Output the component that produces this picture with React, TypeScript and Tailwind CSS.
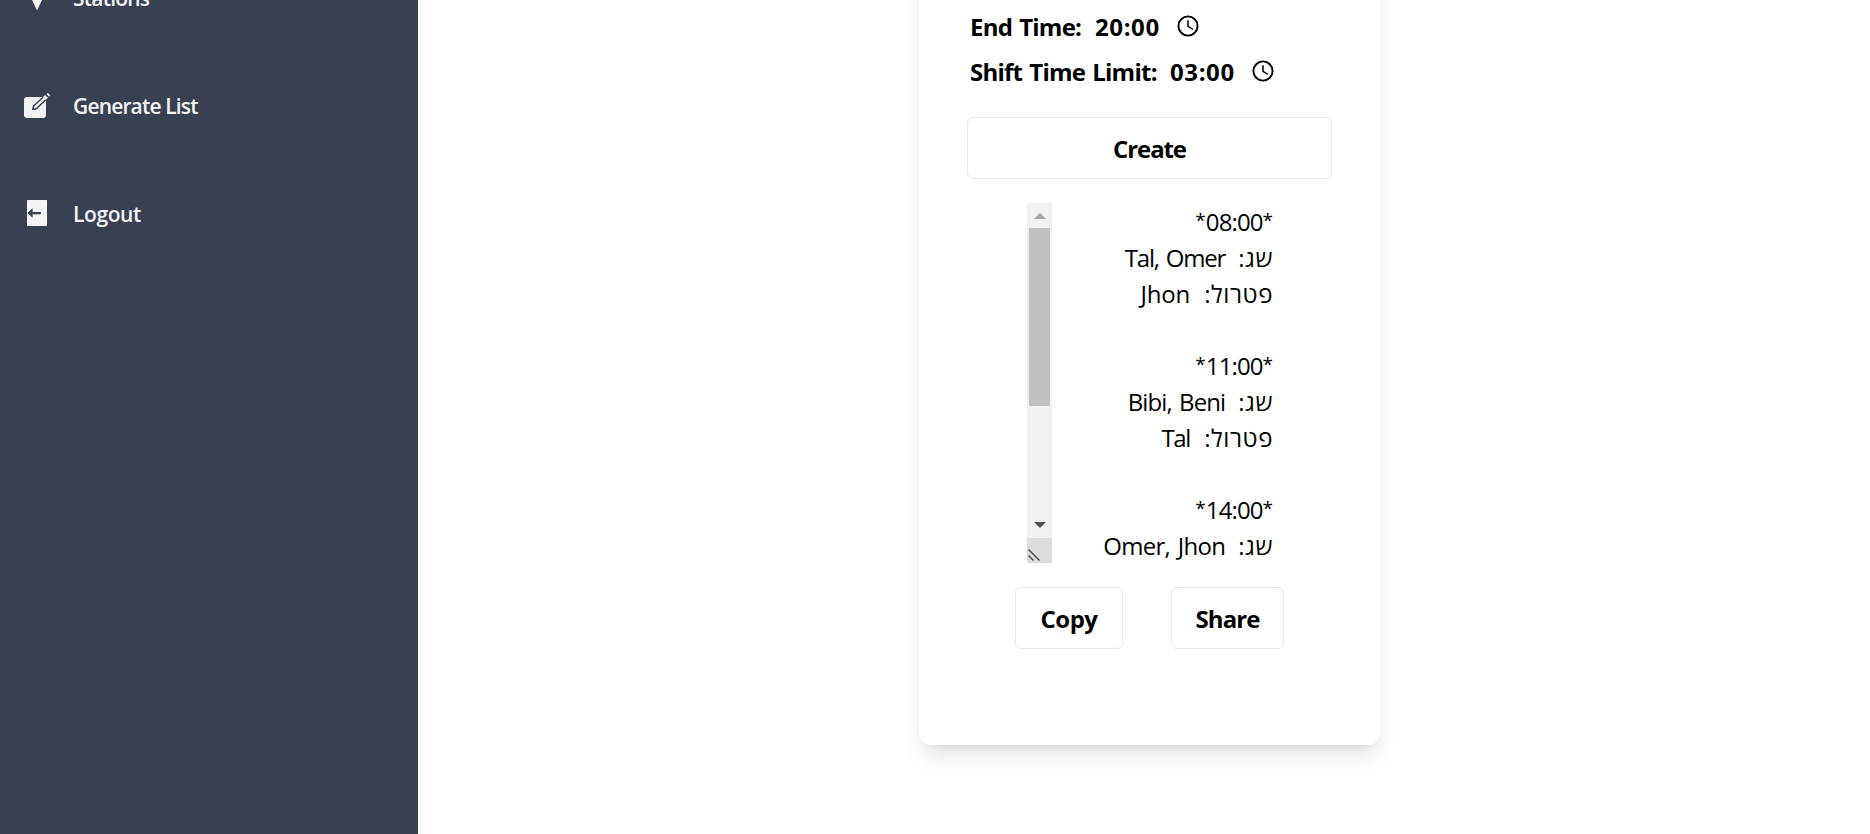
import React from "react";

function ClockIcon() {
  return (
    <svg className="h-6 w-6 shrink-0" viewBox="0 0 24 24" fill="none" stroke="#000">
      <circle cx="12" cy="12" r="9.6" strokeWidth="1.900" />
      <path d="M12 6.3v6.1l4.900 3" strokeWidth="1.500" />
    </svg>
  );
}

function StationIcon() {
  return (
    <svg className="h-[27px] w-[27px]" viewBox="0 0 27 27" fill="#f3f4f6">
      <path d="M13 0c-4.500 0-8 3.500-8 8 0 3 1.700 5.500 3 8l5 10.500 5-10.500c1.300-2.500 3-5 3-8 0-4.500-3.500-8-8-8z" />
    </svg>
  );
}

function EditIcon() {
  return (
    <svg className="h-[27px] w-[27px]" viewBox="0 0 27 27">
      <rect x="0" y="5" width="22" height="21" rx="3" fill="#f3f4f6" />
      <path d="M8 18.300l.9-4.600L21.300 2.400l3.300 3.300L12.600 17.500z" fill="#384152" />
      <path d="M9 17.300l.7-3.200L20.700 3.900l2.400 2.400L12.200 16.600z" fill="#f3f4f6" stroke="#384152" strokeWidth="1.200" />
      <path d="M18.900 5l2.200-2 2.700 2.700-2.100 2.100z" fill="#f3f4f6" />
      <path d="M22.500 2.100l1.400-1.200 2.300 2.300-1.200 1.300z" fill="#f3f4f6" />
    </svg>
  );
}

function LogoutIcon() {
  return (
    <svg className="h-[27px] w-[27px]" viewBox="0 0 27 27">
      <rect x="3" y="0" width="20" height="26" rx="0.600" fill="#f3f4f6" />
      <path d="M3.400 13l5.200-4.700v3.600h8.300v2.300H8.600v3.600z" fill="#384152" />
    </svg>
  );
}

function NavItem({ icon, label, tracking }: { icon: React.ReactNode; label: string; tracking: string }) {
  return (
    <a className="flex h-[108px] items-center gap-[22px] pl-6">
      <span className="mb-px">{icon}</span>
      <span className={`whitespace-nowrap text-[21px] leading-[30px] font-semibold text-gray-100 ${tracking}`}>{label}</span>
    </a>
  );
}

function TimeRow({ label, value, width }: { label: string; value: string; width: string }) {
  return (
    <div className="flex h-[45px] items-center pl-[3px]">
      <span className={`mb-0.5 whitespace-nowrap tracking-[-0.75px] [word-spacing:1.5px] ${width}`}>{label}</span>
      <span className="mb-0.5 w-[64px] whitespace-nowrap tracking-[0.6px]">{value}</span>
      <span className="mb-1 ml-[17px]">
        <ClockIcon />
      </span>
    </div>
  );
}

function Shift({ label, names, tracking, gap }: { label: string; names: string; tracking: string; gap: string }) {
  return (
    <div className="flex h-9 items-center">
      <span className="whitespace-nowrap tracking-[0.6px]">{label}</span>
      <span dir="ltr" className={`whitespace-nowrap [word-spacing:2px] ${gap} ${tracking}`}>{names}</span>
    </div>
  );
}

function Time({ value }: { value: string }) {
  return (
    <div dir="ltr" className="flex h-9 items-center justify-end">
      <span className="mb-1 text-[19px]">*</span>
      <span className="tracking-[-0.9px]">{value}</span>
      <span className="mb-1 text-[19px]">*</span>
    </div>
  );
}

const button = "flex h-[62px] items-center justify-center rounded-md border border-gray-200 bg-white pt-0.5 font-bold";

export default function App() {
  return (
    <div className="flex h-[834px] w-full overflow-hidden bg-white font-['Open_Sans','Noto_Sans',sans-serif] text-2xl leading-9 text-black">
      <aside className="w-[418px] shrink-0 bg-[#384152]">
        <nav className="-mt-[56px] flex flex-col">
          <NavItem icon={<StationIcon />} label="Stations" tracking="tracking-[-0.8px]" />
          <NavItem icon={<EditIcon />} label="Generate List" tracking="tracking-[-0.85px]" />
          <NavItem icon={<LogoutIcon />} label="Logout" tracking="tracking-[-0.4px]" />
        </nav>
      </aside>
      <main className="flex flex-1 justify-center pl-[11px]">
        <section className="-mt-12 flex h-[793px] w-[461px] flex-col rounded-xl bg-white px-12 pt-[53px] shadow-[0_15px_22px_-4px_rgba(0,0,0,0.1),0_6px_9px_-6px_rgba(0,0,0,0.1)]">
          <div className="font-bold">
            <TimeRow label="End Time:" value="20:00" width="w-[125px]" />
            <TimeRow label="Shift Time Limit:" value="03:00" width="w-[200px]" />
          </div>
          <button className={`${button} mt-[22px] w-full tracking-[-1.1px]`}>Create</button>
          <div dir="rtl" className="mt-6 ml-[60px] flex h-[360px] w-[246px] justify-between">
            <div className="h-[360px] overflow-hidden pt-px">
              <Time value="08:00" />
              <Shift label="שג:" names="Tal, Omer" tracking="tracking-[-1.2px]" gap="mr-[13px]" />
              <Shift label="פטרול:" names="Jhon" tracking="tracking-[-0.2px]" gap="mr-[14px]" />
              <div className="h-9" />
              <Time value="11:00" />
              <Shift label="שג:" names="Bibi, Beni" tracking="tracking-[-0.9px]" gap="mr-[13px]" />
              <Shift label="פטרול:" names="Tal" tracking="tracking-[-1.3px]" gap="mr-[14px]" />
              <div className="h-9" />
              <Time value="14:00" />
              <Shift label="שג:" names="Omer, Jhon" tracking="tracking-[-0.7px]" gap="mr-[13px]" />
            </div>
            <div className="flex w-[25px] flex-col items-center bg-[#f1f1f1]">
              <div className="flex h-[25px] items-center justify-center">
                <svg className="h-1.5 w-3" viewBox="0 0 12 6"><path d="M0 6l6-6 6 6z" fill="#a3a3a3" /></svg>
              </div>
              <div className="h-[178px] w-[21px] bg-[#c1c1c1]" />
              <div className="flex-1" />
              <div className="flex h-[25px] items-center justify-center pb-0.5">
                <svg className="h-1.5 w-3" viewBox="0 0 12 6"><path d="M0 0l6 6 6-6z" fill="#505050" /></svg>
              </div>
              <svg className="h-[25px] w-[25px] bg-[#dcdcdc]" viewBox="0 0 25 25" fill="none" stroke="#505050" strokeWidth="1.500">
                <path d="M1.500 11.500L12.500 22.500M1.500 17.500L6.500 22.500" />
              </svg>
            </div>
          </div>
          <div className="mt-6 flex gap-12 pl-12">
            <button className={`${button} w-[108px] tracking-[-0.5px]`}>Copy</button>
            <button className={`${button} w-[113px] tracking-[-0.9px]`}>Share</button>
          </div>
        </section>
      </main>
    </div>
  );
}
